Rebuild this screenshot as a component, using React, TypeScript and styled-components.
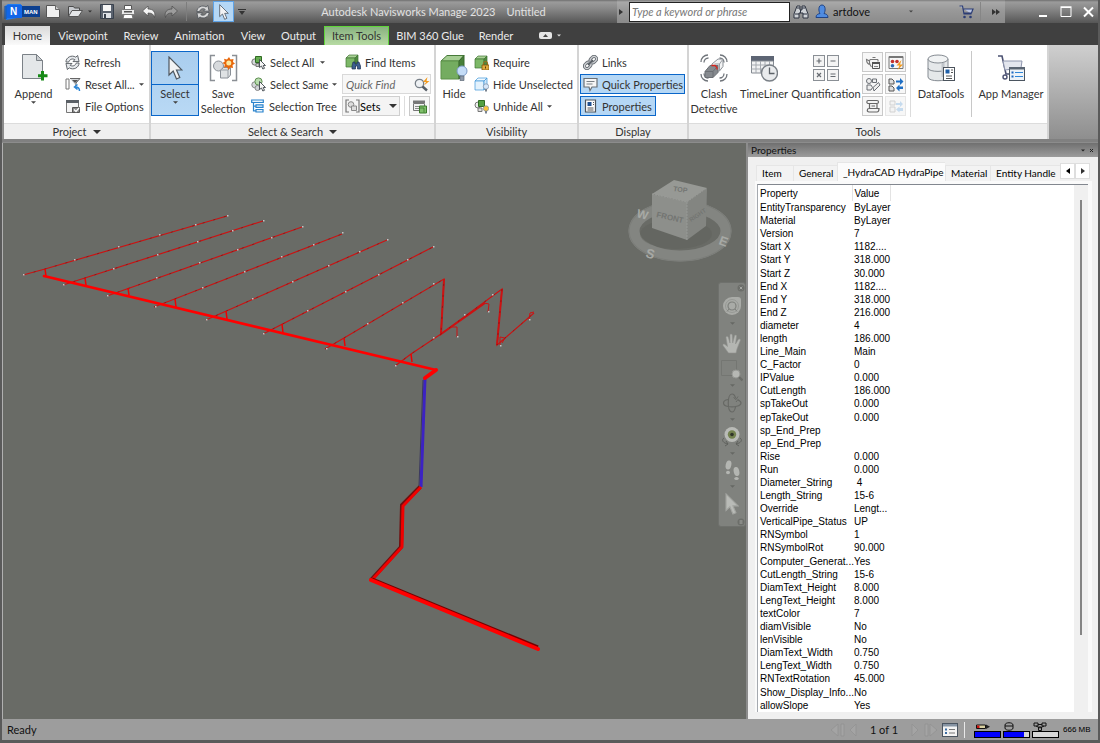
import React from "react";
import styled, { createGlobalStyle } from "styled-components";

const uiFont = `Lato, "Noto Sans", sans-serif`;
const listFont = `"Liberation Sans", Arial, sans-serif`;

const GlobalStyle = createGlobalStyle`
  *, *::before, *::after { box-sizing: border-box; }
  html, body, #root { height: 100%; }
  body { margin: 0; background: #555; font-family: ${uiFont}; font-size: 11px; color: #333; overflow: hidden; }
  button, input, select { font: inherit; color: inherit; margin: 0; padding: 0; border: 0; background: none; border-radius: 0; }
  button { cursor: default; white-space: nowrap; }
  svg { display: block; flex: none; }
`;

/* ---------- window frame ---------- */

const Window = styled.div`
  height: 100vh;
  display: flex;
  flex-direction: column;
  background: #8c8c8c;
  border: solid #5a5a5a;
  border-width: 0 2px 3px 2px;
`;

const TitleBar = styled.header`
  flex: none;
  height: 23px;
  display: flex;
  background: linear-gradient(#6f6f6f 0, #9b9b9b 2px, #8a8a8a 8px, #565656 100%);
`;

const QuickAccess = styled.div`
  display: flex;
  align-items: center;
  padding-left: 2px;
  width: 248px;
`;

const QuickButton = styled.button<{ $w: number; $on?: boolean; $push?: boolean }>`
  width: ${(p) => p.$w}px;
  height: 21px;
  display: flex;
  align-items: center;
  justify-content: center;
  ${(p) => p.$push && "margin-left:auto;"}
  ${(p) => p.$on && "background:#b5d7f5;border:1px solid #5fa3e6;"}
`;

const Rule = styled.span<{ $h: number; $color: string; $gap?: number }>`
  width: 1px;
  height: ${(p) => p.$h}px;
  flex: none;
  margin: 0 ${(p) => p.$gap || 0}px;
  background: ${(p) => p.$color};
`;

const Caption = styled.h1`
  flex: 1;
  margin: 0;
  font-size: 11px;
  font-weight: 400;
  line-height: 24px;
  color: #e2e2e2;
  display: flex;
  justify-content: center;
  gap: 11px;
  white-space: nowrap;
  overflow: hidden;
`;

const InfoCenter = styled.div`
  width: 388px;
  display: flex;
  align-items: center;
  background: linear-gradient(#7d7d7d 0, #a9a9a9 2px, #999 10px, #8b8b8b 100%);
  color: #111;
`;

const SearchInput = styled.input`
  width: 161px;
  height: 20px;
  margin: 0 2px 0 4px;
  padding: 0 2px;
  background: #fff;
  border: 1px solid #222;
  font-style: italic;
  font-size: 11px;
  &::placeholder { color: #777; opacity: 1; }
`;

const UserButton = styled.button`
  display: flex;
  align-items: center;
  gap: 4px;
  width: 98px;
  margin-left: 6px;
  > svg:last-child { margin-left: auto; }
`;

const WindowButtons = styled.div`
  width: 93px;
  display: flex;
  align-items: center;
  justify-content: flex-end;
  gap: 4px;
  padding-right: 1px;
`;

/* ---------- ribbon ---------- */

const TabBar = styled.nav`
  flex: none;
  height: 22px;
  display: flex;
  align-items: flex-end;
  padding-left: 3px;
  background: #404040;
`;

const Tab = styled.button<{ $w: number; $kind?: "active" | "context" }>`
  width: ${(p) => p.$w}px;
  height: 19px;
  line-height: 19px;
  color: ${(p) => (p.$kind ? "#333" : "#ececec")};
  ${(p) => p.$kind === "active" && "background:linear-gradient(#d9d9d9,#fafafa);"}
  ${(p) => p.$kind === "context" && "background:linear-gradient(#88b180,#b7dba3);border:1px solid #5fd53a;border-bottom:0;line-height:18px;"}
`;

const PanelToggle = styled.button`
  display: flex;
  align-items: center;
  gap: 5px;
  height: 19px;
  margin-left: 18px;
`;

const Ribbon = styled.div`
  flex: none;
  display: flex;
  margin: 0 0 0 2px;
  background: linear-gradient(#cfcfcf, #8e8e8e);
`;

const Group = styled.section<{ $w: number }>`
  width: ${(p) => p.$w}px;
  flex: none;
  background: #fff;
  border-right: 2px solid #d4d4d4;
`;

const GroupBody = styled.div<{ $flush?: boolean }>`
  height: 78px;
  padding: 6px 0 0 ${(p) => (p.$flush ? 0 : 1)}px;
  display: flex;
`;

const GroupTitle = styled.h2`
  margin: 0;
  height: 16px;
  background: #efefef;
  border-top: 1px solid #dcdcdc;
  font-size: 11px;
  font-weight: 400;
  line-height: 16px;
  display: flex;
  align-items: center;
  justify-content: center;
  gap: 6px;
`;

const Big = styled.button<{ $w: number; $on?: boolean }>`
  width: ${(p) => p.$w}px;
  height: 65px;
  flex: none;
  display: flex;
  flex-direction: column;
  align-items: center;
  line-height: 15px;
  text-align: center;
  ${(p) => p.$on && "background:linear-gradient(#a9cdee,#b9d9f5);box-shadow:inset 0 0 0 1px #0a66c9;"}
`;

const BigIcon = styled.span<{ $line?: boolean }>`
  width: 100%;
  height: 34px;
  flex: none;
  display: flex;
  align-items: center;
  justify-content: center;
  border-bottom: 1px solid ${(p) => (p.$line ? "#0a66c9" : "transparent")};
  margin-bottom: 1px;
`;

const SmallColumn = styled.div<{ $w: number; $left?: number }>`
  width: ${(p) => p.$w}px;
  flex: none;
  display: flex;
  flex-direction: column;
  align-items: flex-start;
  gap: 2px;
  padding-top: 1px;
  margin-left: ${(p) => p.$left || 0}px;
`;

const Small = styled.button<{ $on?: boolean; $w?: number }>`
  height: 20px;
  display: flex;
  align-items: center;
  gap: 4px;
  padding: 0 3px;
  ${(p) => p.$w && `width:${p.$w}px;`}
  ${(p) => p.$on && "background:#b5d7f5;border:1px solid #0a66c9;padding:0 2px;"}
  > svg:nth-of-type(2) { margin-left: auto; }
`;

const FieldRow = styled.div`
  display: flex;
  align-items: center;
  gap: 4px;
`;

const QuickFind = styled.label`
  width: 89px;
  height: 20px;
  display: flex;
  align-items: center;
  padding: 0 1px 0 3px;
  background: #f7f7f7;
  border: 1px solid #d9d9d9;
  input { width: 68px; font-style: italic; font-size: 11px; }
  input::placeholder { color: #666; opacity: 1; }
`;

const SetsBox = styled.label`
  width: 58px;
  height: 20px;
  display: flex;
  align-items: center;
  position: relative;
  padding-left: 2px;
  background: #f4f4f4;
  border: 1px solid #cfcfcf;
  select { appearance: none; width: 38px; color: #000; }
  > svg:last-child { position: absolute; right: 2px; }
`;

const Tile = styled.button<{ $dim?: boolean }>`
  width: 21px;
  height: 20px;
  display: flex;
  align-items: center;
  justify-content: center;
  background: #f7f7f7;
  border: 1px solid ${(p) => (p.$dim ? "#e6e6e6" : "#c9c9c9")};
`;

const TileGrid = styled.div`
  display: grid;
  grid-template-columns: 21px 21px;
  grid-auto-rows: 20px;
  gap: 2px;
  padding-top: 1px;
`;

/* ---------- work area ---------- */

const Work = styled.main`
  flex: 1;
  min-height: 0;
  display: flex;
  gap: 2px;
  padding: 1px 0 0 0;
  border-top: 3px solid #808080;
`;

const Viewport = styled.div`
  flex: 1;
  min-width: 0;
  position: relative;
  background: #696b66;
  border-left: 1px solid #b0b0b0;
  > svg { width: 100%; height: 100%; }
`;

const Cube = styled.div`
  position: absolute;
  right: 8px;
  top: 27px;
`;

const NavBar = styled.div`
  position: absolute;
  right: 0;
  top: 139px;
  width: 28px;
  display: flex;
  flex-direction: column;
  align-items: stretch;
  background: #80827e;
  border: 1px solid #6f716d;
  border-radius: 3px;
`;

const NavButton = styled.button<{ $h: number; $end?: boolean }>`
  height: ${(p) => p.$h}px;
  display: flex;
  align-items: center;
  justify-content: ${(p) => (p.$end ? "flex-end" : "center")};
`;

const Side = styled.aside`
  width: 350px;
  flex: none;
  display: flex;
  flex-direction: column;
  background: #f0f0f0;
`;

const SideTitle = styled.header`
  flex: none;
  height: 14px;
  display: flex;
  align-items: center;
  gap: 4px;
  padding: 0 4px 0 3px;
  background: linear-gradient(#707070, #9c9c9c);
  color: #111;
  font-size: 10px;
  h2 { margin: 0 auto 0 0; font: inherit; line-height: 13px; }
`;

const SideTabs = styled.div`
  flex: none;
  display: flex;
  align-items: flex-end;
  height: 24px;
  padding: 0 8px;
`;

const SideTab = styled.button<{ $w: number; $on?: boolean }>`
  width: ${(p) => p.$w}px;
  height: ${(p) => (p.$on ? 19 : 16)}px;
  line-height: 15px;
  padding-left: 5px;
  text-align: left;
  font-size: 10px;
  color: #000;
  background: ${(p) => (p.$on ? "#fbfbfb" : "#f3f3f3")};
  border-left: 1px solid #e6e6e6;
  border-top: 1px solid #e6e6e6;
`;

const Scroller = styled.button`
  width: 15px;
  height: 16px;
  display: flex;
  align-items: center;
  justify-content: center;
  margin-bottom: 2px;
  background: #fff;
  border: 1px solid #dedede;
`;

const Sheet = styled.div`
  flex: 1;
  min-height: 0;
  margin: 0 6px 7px 7px;
  padding: 3px 4px 0 2px;
  background: #fafafa;
`;

const ListBox = styled.div`
  height: 100%;
  display: flex;
  overflow: hidden;
  background: #fff;
  border-top: 1px solid #82878f;
  border-left: 1px solid #a5a9af;
`;

const PropertyTable = styled.table`
  height: 100%;
  width: 133px;
  table-layout: fixed;
  border-collapse: collapse;
  font-family: ${listFont};
  font-size: 10px;
  line-height: 13px;
  color: #000;
  th, td { padding: 0 0 0 2px; text-align: left; font-weight: 400; white-space: pre; }
  th { height: 16px; border-right: 1px solid #e3e3e3; }
`;

const ScrollTrack = styled.div`
  width: 14px;
  margin-left: auto;
  background: #f0f0f0;
  display: flex;
  justify-content: center;
  padding-top: 15px;
`;

const ScrollThumb = styled.div`
  width: 2px;
  height: 85%;
  background: #858585;
`;

const StatusBar = styled.footer`
  flex: none;
  height: 21px;
  display: flex;
  align-items: center;
  padding: 0 10px 0 5px;
  background: #9d9d9d;
  color: #111;
  line-height: 20px;
`;

const Sheets = styled.div`
  margin-left: auto;
  display: flex;
  align-items: center;
  gap: 2px;
  > button { margin-left: 2px; }
`;

const Counter = styled.span`
  width: 44px;
  text-align: center;
`;

const Gauges = styled.div`
  display: flex;
  gap: 2px;
  margin: 0 4px 0 5px;
`;

const Gauge = styled.div`
  width: 27px;
  display: flex;
  flex-direction: column;
  > svg { margin-left: 1px; }
`;

const GaugeBar = styled.div`
  height: 7px;
  border: 1px solid #000;
  background: #d8d8d8;
`;

const GaugeFill = styled.div`
  height: 100%;
  background: #0000ff;
`;

const Memory = styled.span`
  width: 25px;
  white-space: nowrap;
  font-family: ${listFont};
  font-size: 8px;
  color: #000;
`;

/* ---------- icons ---------- */

type SvgProps = { w: number; h: number; box?: string; children: React.ReactNode };
const Svg = ({ w, h, box, children }: SvgProps) => (
  <svg width={w} height={h} viewBox={box || `0 0 ${w} ${h}`} fill="none" aria-hidden="true">
    {children}
  </svg>
);

const Caret = ({ w = 5, color = "#444" }: { w?: number; color?: string }) => (
  <Svg w={w} h={3} box="0 0 6 3"><path d="M0 0h6L3 3z" fill={color} /></Svg>
);
const WideCaret = () => <Svg w={8} h={4}><path d="M0 0h8L4 4z" fill="#333" /></Svg>;

const Logo = () => (
  <Svg w={36} h={16}>
    <path d="M1 2l3-2h13v14l-4 0-11 2z" fill="#1f7bf0" />
    <path d="M0 2h3v13H0z" fill="#0a4ca8" opacity=".5" />
    <rect x="3" y="1" width="15" height="13" fill="#1266e8" />
    <rect x="18" y="2" width="18" height="11" fill="#0c3f8f" />
    <text x="6" y="11" fontFamily="Liberation Sans" fontWeight="700" fontSize="10" fill="#fff">N</text>
    <text x="20" y="10" fontFamily="Liberation Sans" fontWeight="700" fontSize="6" fill="#fff">MAN</text>
  </Svg>
);
const NewDoc = () => (
  <Svg w={14} h={13}><path d="M.5.5h9l4 4v8H.5z" fill="#f1f1f1" stroke="#555" /><path d="M9.500 .5v4h4" fill="#ccc" stroke="#666" /></Svg>
);
const OpenFolder = () => (
  <Svg w={16} h={13}><path d="M1.500 11.500V1.500h5l1 1.500h5v3" fill="#c9ccd0" stroke="#4b4b4b" /><path d="M1.500 11.500L5 5.500h10.500l-4 6z" fill="#e4e6e8" stroke="#555" /></Svg>
);
const Save = () => (
  <Svg w={14} h={15}><path d="M.5.5h13v14h-13z" fill="#5a626e" stroke="#39414d" /><rect x="3" y="1" width="8" height="6" fill="#f6f6f6" /><rect x="3" y="9" width="8" height="5" fill="#dfe3e8" /><rect x="4" y="10" width="2" height="4" fill="#39414d" /></Svg>
);
const Print = () => (
  <Svg w={14} h={14}><path d="M3.500 4V.5h7V4" fill="#fff" stroke="#555" /><rect x=".5" y="4.500" width="13" height="5" rx="1" fill="#e9e9e9" stroke="#777" /><rect x="3" y="6" width="8" height="1.500" fill="#555" /><path d="M3 9.500h8l1 4H2z" fill="#fff" stroke="#777" /></Svg>
);
const Undo = ({ dim }: { dim?: boolean }) => (
  <Svg w={14} h={12} box={dim ? "-14 0 14 12" : "0 0 14 12"}>
    <path d="M6 0v3c5 0 8 3 6.500 8.500C12 8.500 10 7 6 7v3L.5 5z" fill={dim ? "#9c9c9c" : "#f4f4f4"} stroke="#4a4a4a" strokeWidth=".7" transform={dim ? "scale(-1 1)" : undefined} />
  </Svg>
);
const Refresh = ({ s = 15, light }: { s?: number; light?: boolean }) => (
  <Svg w={s} h={s} box="0 0 16 16">
    <path d="M1 7.500C1 2.500 7 -.5 11.500 2.300L13.500 .5 15 7H8.500l2-2C7.500 3.200 4.700 5 4 7.500z" fill={light ? "#d8d8d8" : "#e6e9ec"} stroke="#4a4f55" strokeWidth=".9" />
    <path d="M15 8.500c0 5-6 8-10.500 5.200L2.500 15.500 1 9h6.500l-2 2c3 1.800 5.800 0 6.500-2.500z" fill={light ? "#d8d8d8" : "#e6e9ec"} stroke="#4a4f55" strokeWidth=".9" />
  </Svg>
);
const Cursor = ({ w, h, dim }: { w: number; h: number; dim?: boolean }) => (
  <Svg w={w} h={h} box="0 0 15 24">
    <path d="M1 1v18l4.200-4 3.300 8 3.300-1.500L8.500 14H14z" fill={dim ? "#b9bbb7" : "#f2f3f4"} stroke={dim ? "#a3a5a1" : "#4d565f"} strokeWidth="1.200" />
  </Svg>
);
const Customize = () => <Svg w={8} h={6}><path d="M0 .5h8" stroke="#333" /><path d="M1 2h6L4 6z" fill="#333" /></Svg>;
const RightTri = () => <Svg w={4} h={6}><path d="M0 0v6l4-3z" fill="#333" /></Svg>;
const Binoculars = () => (
  <Svg w={16} h={16}>
    <path d="M4 2h3v4h2V2h3l3 8v4h-5V9H6v5H1v-4z" fill="#cfd2d6" stroke="#2d3340" />
    <path d="M4 4h3M9 4h3M2 10h4M10 10h4M7.500 6v3" stroke="#2d3340" />
  </Svg>
);
const User = () => (
  <Svg w={14} h={15}><path d="M1 13.500c0-3 2-3.500 4-4C3.500 7.500 3 1 7 1s3.500 6.500 2 8.500c2 .5 4 1 4 4z" fill="#4f8be0" stroke="#1f4385" /></Svg>
);
const CartSmall = () => (
  <Svg w={15} h={14}><path d="M.5 1h3l1.500 8h7.500M4 4h10l-1.500 4H5" fill="#b9c4e2" stroke="#2c3d74" strokeWidth="1.200" /><circle cx="5.500" cy="12" r="1.300" fill="#2c3d74" /><circle cx="11.500" cy="12" r="1.300" fill="#2c3d74" /></Svg>
);
const DoubleRight = () => <Svg w={8} h={6}><path d="M0 0v6l4-3zM4 0v6l4-3z" fill="#333" /></Svg>;
const Minimize = () => <Svg w={17} h={12}><path d="M4 10h8" stroke="#fff" strokeWidth="2" /></Svg>;
const Maximize = () => <Svg w={20} h={12}><path d="M5 1.500h10v9H5z" stroke="#fff" /><path d="M4.500 1h11" stroke="#fff" strokeWidth="1.500" /></Svg>;
const Close = () => <Svg w={17} h={12}><path d="M4 1.500l9 9M13 1.500l-9 9" stroke="#fff" strokeWidth="2" /></Svg>;

const AppendIcon = () => (
  <Svg w={28} h={29}>
    <path d="M2.500 1.500h14l6 6v18h-20z" fill="#e4e7e9" stroke="#7b8187" />
    <path d="M16.500 1.500v6h6z" fill="#c9cdd0" stroke="#7b8187" />
    <path d="M22.500 18v9.500M18 22.700h9.500" stroke="#178a17" strokeWidth="3" />
  </Svg>
);
const ResetIcon = () => (
  <Svg w={16} h={15}>
    <path d="M1 2h3v10H1z" stroke="#777" /><path d="M5 1.500h10L11 6v3" fill="#d4d7da" stroke="#666" />
    <path d="M7 3h6l-3 3z" fill="#555" /><path d="M14.500 14c0-3-1.500-4-4-4m2-2.500L9.500 10l3 2.500" stroke="#2d86d6" strokeWidth="1.500" />
  </Svg>
);
const FileOptIcon = () => (
  <Svg w={16} h={15}><path d="M1.500 1.500h12v12h-12z" fill="#f4f4f4" stroke="#777" /><path d="M1 1h13v3H1z" fill="#5a5f65" /><path d="M7.500 8.500h7v5h-7z" fill="#888" stroke="#555" /><path d="M9 10.500l2 2 3-3.500" stroke="#fff" strokeWidth="1.200" /></Svg>
);
const SaveSelIcon = () => (
  <Svg w={29} h={28}>
    <path d="M6 1.500H1.500v25H6M23 1.500h4.500v25H23" stroke="#8a8f95" strokeWidth="1.500" />
    <circle cx="9.500" cy="12" r="5" fill="#d7dadd" stroke="#8a9097" />
    <path d="M11.500 16l3-2.500h7v7.500L19 24h-7.500z" fill="#dfe2e4" stroke="#8a9097" /><path d="M11.500 16H19v8M19 16l2.500-2.500" stroke="#9aa0a6" />
    <path d="M20 3l1.500 2.500L24.500 5l-.5 3L26 9.500 23.500 11l.5 3-3-.5L19.500 16 18 13l-3 .5.800-3L13.500 9l2.300-1.500L15 4.700l3 .8z" fill="#e8680c" /><circle cx="19.800" cy="9" r="2.500" fill="#fbe9a0" />
  </Svg>
);
const MiniCursor = ({ x, y }: { x: number; y: number }) => (
  <path transform={`translate(${x} ${y})`} d="M0 0v8l2-1.500 1.300 3 1.700-.7L3.700 6H6z" fill="#f7f7f7" stroke="#3f464d" strokeWidth=".9" />
);
const SelectAllIcon = () => (
  <Svg w={15} h={15}><circle cx="4" cy="7" r="3.200" fill="#d6d9dc" stroke="#777" /><path d="M4.500 1.500h6v6h-6z" fill="#67ad52" stroke="#2f6b22" /><path d="M5 8.500h3v3H5z" fill="#ccc" stroke="#777" /><MiniCursor x={8.500} y={4.500} /></Svg>
);
const SelectSameIcon = () => (
  <Svg w={15} h={15}><circle cx="3.800" cy="7.800" r="3" fill="#d6d9dc" stroke="#888" /><circle cx="7.500" cy="4.500" r="3.600" fill="#b9dcae" stroke="#5f8f52" /><circle cx="6.500" cy="11" r="2.500" fill="#d0d3d6" stroke="#888" /><MiniCursor x={8.500} y={4.500} /></Svg>
);
const TreeIcon = () => (
  <Svg w={14} h={14}><path d="M.7 1h11.600v2.500H.7zM5 5.800h7v2.500H5zM5 10.500h7V13H5z" fill="#eaf4fc" stroke="#2b84cd" strokeWidth="1.200" /><path d="M2.500 4v7.800H5M2.500 7.200H5" stroke="#2b84cd" strokeWidth="1.200" /></Svg>
);
const cubeShape = (edge: string, top: string, front: string, side: string) => (
  <>
    <path d="M1 4l3-3h9l-3 3z" fill={top} stroke={edge} strokeWidth=".7" />
    <path d="M1 4h9v9H1z" fill={front} stroke={edge} strokeWidth=".7" />
    <path d="M10 4l3-3v9l-3 3z" fill={side} stroke={edge} strokeWidth=".7" />
  </>
);
const greenCube = cubeShape("#3f7433", "#a9d295", "#7db868", "#4f8a40");
const FindIcon = () => <Svg w={16} h={16}>{greenCube}<g transform="translate(7 7)"><path d="M1 1h2v2h2V1h2l1.500 4v3H5.500V5h-2v3H0V5z" fill="#3d5f8f" stroke="#1f3355" strokeWidth=".7" /></g></Svg>;
const QuickFindIcon = () => (
  <Svg w={16} h={15}><circle cx="5.500" cy="6.500" r="4.200" fill="#eef1f4" stroke="#777f88" strokeWidth="1.300" /><path d="M8.500 9.500l4.500 4" stroke="#555d66" strokeWidth="2.400" /><path d="M13.500 0L9 5h3l-2 3.500L15.500 4h-3z" fill="#f39a1c" /></Svg>
);
const SetsIcon = () => (
  <Svg w={15} h={14}><path d="M4 1H1v12h3M11 1h3v12h-3" stroke="#777" strokeWidth="1.200" /><circle cx="6" cy="5.500" r="2.800" fill="#ddd" stroke="#888" /><path d="M6.500 7h5v4.500h-5z" fill="#ddd" stroke="#888" /></Svg>
);
const InspectIcon = () => (
  <Svg w={16} h={15}><path d="M1 1.500h12v2.500H1z" fill="#777" /><path d="M1.500 4.500h11v7h-11z" fill="#f1f1f1" stroke="#777" /><path d="M3 7.500h4M3 9.500h4" stroke="#888" /><path d="M7.500 7h7v7h-7z" fill="#7fbf6a" stroke="#3b7a2b" /><path d="M7 9h5v4.500" stroke="#3b7a2b" strokeWidth=".8" /></Svg>
);
const HideIcon = () => (
  <Svg w={28} h={28}>
    <path d="M1 7l6-5.500h17L19 7z" fill="#a5cd93" stroke="#477a3a" /><path d="M1 7h18v18H1z" fill="#74ac60" stroke="#5c9149" /><path d="M19 7l5-5.500v17L19 25z" fill="#477f39" stroke="#3a6a2e" />
    <circle cx="22" cy="17" r="5" fill="#c4dcf7" stroke="#7d9cc8" /><path d="M20 22h4v4.500h-4z" fill="#8d99a8" stroke="#5f6a79" strokeWidth=".7" />
  </Svg>
);
const RequireIcon = () => <Svg w={15} h={15}>{greenCube}<path d="M9.500 10V8.500a2 2 0 014 0V10" stroke="#9a6f1c" strokeWidth="1.200" /><path d="M8 10h7v5H8z" fill="#e0aa3e" stroke="#7d570f" strokeWidth=".8" /><path d="M11 11.500h1v2h-1z" fill="#5a3d08" /></Svg>;
const MiniBulb = ({ fill }: { fill: string }) => <><circle cx="12" cy="9.500" r="2.700" fill={fill} stroke="#7b8ba0" strokeWidth=".7" /><path d="M11 12h2v2.500h-2z" fill="#7b8490" /></>;
const HideUnselIcon = () => <Svg w={15} h={15}>{cubeShape("#3c97d8", "#f1f9ff", "#e3f2fd", "#cfe7fa")}<MiniBulb fill="#d6e7fa" /></Svg>;
const UnhideIcon = () => <Svg w={15} h={15}><circle cx="4" cy="6" r="3" fill="#eee" stroke="#777" /><path d="M4.500 1.500h6v6h-6z" fill="#55a043" stroke="#2f6b22" /><path d="M4 9h4v3.500H4z" fill="#ddd" stroke="#777" /><MiniBulb fill="#f9c33b" /></Svg>;
const LinkIcon = () => (
  <Svg w={15} h={15}>
    <g transform="rotate(-45 7.500 7.500)">
      <g stroke="#6a7076" strokeWidth="3"><rect x="0" y="5" width="7" height="5" rx="2.500" /><rect x="8" y="5" width="7" height="5" rx="2.500" /></g>
      <g stroke="#d4d6d9" strokeWidth="1.200"><rect x="0" y="5" width="7" height="5" rx="2.500" /><rect x="8" y="5" width="7" height="5" rx="2.500" /></g>
      <path d="M4 7.500h7" stroke="#555b62" strokeWidth="1.800" />
    </g>
  </Svg>
);
const SpeechIcon = () => <Svg w={15} h={15}><path d="M1 1.500h13v8.500H9L7 13.500 6 10H1z" fill="#f5f5f5" stroke="#6a7076" strokeWidth="1.200" /><path d="M3.500 4.500h8M3.500 7h6" stroke="#7a8086" /></Svg>;
const PropsIcon = () => <Svg w={15} h={14}><path d="M2.500 1h10v12h-10z" fill="#fff" stroke="#4d545b" strokeWidth="1.200" /><path d="M4.500 3h4v4h-4z" fill="#1f4f8f" /><path d="M10 3.500h1M10 5.500h1M4.500 9h6M4.500 11h6" stroke="#555" /></Svg>;

const ClashIcon = () => (
  <Svg w={28} h={28}>
    <path d="M1 8c0-4 3-7 7-7M4 8.500c0-2.500 2-4.500 4.500-4.500M27 8c0-4-3-7-7-7M24 8.500c0-2.500-2-4.500-4.500-4.500M1 20c0 4 3 7 7 7M4 19.500C4 22 6 24 8.500 24M27 20c0 4-3 7-7 7M24 19.500c0 2.500-2 4.500-4.500 4.500" stroke="#6f747a" strokeWidth="1.300" />
    <path d="M12 10l6-5h5v7.500L19.500 17H12z" fill="#f2f3f4" stroke="#8a8f95" /><path d="M23 5l-3.500 5h-5M19.500 10v7" stroke="#9b9fa5" />
    <path d="M5 17.500l5-6h8v7L13 23.500H5z" fill="#85898e" stroke="#6b6f74" /><path d="M5 17.500h8v6M13 17.500l5-6" stroke="#6b6f74" />
    <path d="M11.500 11.500H15l2 2v2" stroke="#d8231b" strokeWidth="1.300" />
  </Svg>
);
const TimelineIcon = () => (
  <Svg w={28} h={28}>
    <path d="M1 2h23v5H1z" fill="#5d6574" /><path d="M1.500 7h22v12h-22z" fill="#f1f2f3" stroke="#858b92" /><path d="M6 7v12M10.500 7v12M15 7v12M19.500 7v8M1.500 11h22M1.500 15h13" stroke="#a5aab0" />
    <circle cx="19.500" cy="19" r="8" fill="#e9ebed" stroke="#7a8087" strokeWidth="1.400" /><path d="M19.500 13.500V19.500h5" stroke="#5c6268" strokeWidth="1.300" />
  </Svg>
);
const QuantIcon = () => (
  <Svg w={27} h={28}><g fill="#f4f4f4" stroke="#8a8f95"><rect x=".5" y="1.500" width="11" height="11" /><rect x="14.500" y="1.500" width="11" height="11" /><rect x=".5" y="15.500" width="11" height="11" /><rect x="14.500" y="15.500" width="11" height="11" /></g><path d="M3.500 7h5M6 4.500v5M17.500 7h5M4 19l4 4M8 19l-4 4M17.500 20h5M17.500 22.500h5" stroke="#666b71" strokeWidth="1.200" /></Svg>
);
const DataIcon = () => (
  <Svg w={29} h={28}>
    <path d="M1 5v18c0 5 20 5 20 0V5" fill="#e5e8ea" stroke="#858b92" /><ellipse cx="11" cy="5" rx="10" ry="4" fill="#f1f3f4" stroke="#858b92" /><path d="M1 14c0 4.500 20 4.500 20 0" stroke="#858b92" /><path d="M16 9v14" stroke="#c0c5ca" strokeWidth="3" />
    <rect x="16.500" y="13.500" width="11" height="13" fill="#fff" stroke="#4b535c" /><path d="M18.500 15.500h4v4h-4z" fill="#1f5fa8" /><path d="M24 16h2M24 18.500h2M19 22h6M19 24.500h6" stroke="#555" />
  </Svg>
);
const AppIcon = () => (
  <Svg w={29} h={28}>
    <path d="M1 2h4l4 18h6" stroke="#4b5172" strokeWidth="1.600" /><path d="M6 7h19l-1 7-16 2z" fill="#e3e6ee" stroke="#9097af" /><circle cx="8" cy="23" r="2" fill="#fff" stroke="#4b5172" strokeWidth="1.400" />
    <rect x="12.500" y="13.500" width="15" height="13" fill="#eef3f8" stroke="#4b5560" /><path d="M12 13h16v2.500H12z" fill="#5a6573" /><path d="M14.500 18.500h2M14.500 22.500h2" stroke="#1a66c0" strokeWidth="2" /><path d="M18 18.500h8M18 22.500h8" stroke="#2f86d8" />
  </Svg>
);
const TeapotIcon = () => <Svg w={16} h={15}><path d="M5 4.500h8M7.500 2.500h3M5 4.500c-1 2-.5 5 1.500 7.500M4.500 6L1.500 4.500c0 3 1.500 5 4 5M13 4.500v2" stroke="#777" strokeWidth="1.100" /><path d="M7.500 7.500h7v6h-7z" fill="#f5f5f5" stroke="#555" /><path d="M7 7h8v2H7z" fill="#555" /><path d="M9 11.500h4" stroke="#888" /></Svg>;
const AppearanceIcon = () => <Svg w={16} h={15}><path d="M1 1.500h14v12H1z" fill="#f6f6f6" stroke="#777" /><path d="M1 1h14v2H1z" fill="#777" /><circle cx="4.500" cy="6.500" r="1.800" fill="#c4302b" /><circle cx="9" cy="6.500" r="1.800" fill="#c4302b" /><circle cx="4.500" cy="10.800" r="1.800" fill="#2b68b5" /><path d="M13.500 5L8.500 10.500h3L9.500 15 15 9.500h-3z" fill="#f39a1c" /></Svg>;
const BatchIcon = () => <Svg w={16} h={15}><g stroke="#6a6f75" fill="#eee"><circle cx="4" cy="4" r="2.500" /><path d="M7.500 2h4v3.500h-4zM2 8h4l1.500 2.500L6 13H2zM8 10.500l5.500-5L15 8l-6 6z" /></g></Svg>;
const CompareIcon = () => <Svg w={16} h={15}><path d="M1 2h3l2 2v3H1zM1 9h3l2 2v3H1z" fill="#ddd" stroke="#555" /><path d="M8 3.500h4V1l3.500 3.500L12 8V5.500H8zM15 9.500h-3.500V7.500L8 11l3.500 3.500v-2.500H15z" fill="#1f6fc4" /></Svg>;
const ScriptIcon = () => <Svg w={16} h={15}><path d="M3 1.500h9c2 0 2 3 0 3v5h2c0 3-1 3.500-2 3.500H4c-2.500 0-2-3.500 0-3.500h.5v-5H3c-1.500 0-1.500-3 0-3zM4.500 4.500H12M4.500 9.500H12M6.500 7h3.500" fill="#f3f3f3" stroke="#666" strokeWidth="1.200" /></Svg>;
const SwitchIcon = () => <Svg w={16} h={15}><g opacity=".4"><path d="M2 2h5v4H2zM2 8h5v5H2z" fill="#eee" stroke="#999" /><path d="M8 4h4V2l3 3-3 3V6H8zM15 9h-3.500V7.500L8 10.500l3.500 3V12H15z" fill="#7fb2e2" /></g></Svg>;

/* navigation bar glyphs */
const tone = "#b4b6b2";
const Wheel = () => <Svg w={18} h={18}><path d="M0 9a9 9 0 019-9h6q3 0 3 3v6a9 9 0 01-18 0z" fill="#a9aba7" /><circle cx="9" cy="9" r="6.500" stroke="#979995" /><circle cx="9" cy="9" r="4" stroke="#7e807c" strokeWidth="1.200" /><path d="M4 14.500l2-2.500M14 14.500l-2-2.500" stroke="#7e807c" /></Svg>;
const Hand = () => <Svg w={20} h={21}><path d="M6.500 20L1 12.500c-.5-1.500 1-2 2-1l2.500 2L4 4.500c0-1.500 2-1.500 2.300 0L8 10V2c0-1.500 2.200-1.500 2.200 0l.5 8L12.500 3c.3-1.500 2.300-1 2 .4L13.500 11l2.800-4.500c1-1.300 2.500-.3 2 1L15 16l-1 4z" fill={tone} stroke="#90928e" strokeWidth=".6" /></Svg>;
const ZoomWin = () => <Svg w={22} h={22}><path d="M.5 .5h15v15H.5z" stroke="#747672" /><circle cx="15" cy="14" r="4" fill="#b6b8b4" stroke="#969894" /><path d="M18 17l3.500 3.500" stroke="#6a6c68" strokeWidth="2.400" /></Svg>;
const Orbit = () => <Svg w={20} h={20}><path d="M10 1c-5 0-5 18 0 18 2 0 3-2.500 3.500-5M10 1c2 0 3 2 3.500 4M6 6.500C0 7.500 0 12.500 6 13.500c6 1 13-.5 13-3.500 0-1.500-1.500-2.500-3-3" stroke="#676965" strokeWidth="1.200" /><path d="M11.500 4.500l2.500 2 2-3M14 9l2-2.500 2 2" stroke="#676965" /></Svg>;
const Look = () => <Svg w={22} h={22}><path d="M3 12c-3 2-1 5 4 6M19 12c3 2 1 5-4 6M5 15l2 3-3 2M17 15l-2 3 3 2" stroke="#5f615d" /><circle cx="11" cy="8.500" r="7.500" fill="#b9bbb7" /><circle cx="11" cy="8.500" r="4.200" fill="#73824f" /><circle cx="11" cy="8.500" r="1.800" fill="#30352a" /></Svg>;
const Walk = () => <Svg w={17} h={21}><ellipse cx="4.500" cy="5" rx="2.800" ry="4.500" transform="rotate(12 4.500 5)" fill={tone} /><ellipse cx="4" cy="12.500" rx="2" ry="1.700" fill={tone} /><ellipse cx="12.500" cy="11.500" rx="2.800" ry="4.500" transform="rotate(-12 12.500 11.500)" fill={tone} /><ellipse cx="12.500" cy="18.500" rx="2.200" ry="1.500" fill={tone} /></Svg>;
const Dot = ({ lines }: { lines?: boolean }) => <Svg w={8} h={8}><circle cx="4" cy="4" r="3.500" fill="#6c6e6a" /><path d={lines ? "M2.500 3h3M2.500 5h3" : "M2.700 2.700l2.600 2.600M5.300 2.700L2.700 5.300"} stroke="#a5a7a3" /></Svg>;

const ViewCube = () => (
  <svg width="114" height="100" viewBox="624 170 114 100" fill="none" role="img" aria-label="ViewCube">
    <ellipse cx="680" cy="231" rx="46" ry="25" stroke="#838581" strokeWidth="11" />
    <ellipse cx="680" cy="231" rx="51" ry="30" stroke="#7b7d79" strokeWidth="1" />
    <ellipse cx="676" cy="234" rx="36" ry="15" fill="#5f615c" opacity=".5" />
    <path d="M652 194l22-14 33 8-20 14z" fill="#979995" />
    <path d="M652 194l35 8v38l-35-12z" fill="#8d8f8b" />
    <path d="M687 202l20-14-1 38-19 14z" fill="#838581" />
    <path d="M652 194l35 8 20-14M687 202v38" stroke="#9fa19d" strokeWidth=".7" strokeDasharray="2 1" />
    <g fontFamily="Liberation Sans" fontWeight="700" fill="#737572">
      <text x="673" y="191" fontSize="7" transform="rotate(8 673 191)">TOP</text>
      <text x="656" y="217" fontSize="8" transform="rotate(13 656 217)">FRONT</text>
      <text x="691" y="222" fontSize="6" transform="rotate(-34 691 222)">RIGHT</text>
      <g fill="#a7a9a5">
        <text x="636" y="217" fontSize="12" transform="rotate(15 636 217)">W</text>
        <text x="645" y="257" fontSize="13" transform="rotate(15 645 257)">S</text>
        <text x="718" y="244" fontSize="13" transform="rotate(20 718 244)">E</text>
      </g>
    </g>
  </svg>
);

/* ---------- piping model ---------- */

const branches = [
  "M23 275L45 269L227 216", "M63 285L263 221", "M107 296L302 227", "M154 307L342 234",
  "M206 320L387 240", "M263 334L433 247", "M325 349L344 338L444 279L441 334", "M395 366L411 354L441 334L502 289L497 345L534 313",
];
const risers = [[45, 269, 276], [85, 278, 285], [128, 288, 295], [175, 299, 307], [226, 311, 319], [282, 324, 333], [344, 338, 346], [411, 354, 362]];
const heads = [
  [23, 275], [74, 260], [118, 247], [159, 235], [195, 225], [227, 216],
  [63, 285], [113, 269], [157, 255], [197, 242], [232, 231], [263, 221],
  [107, 296], [156, 278], [199, 263], [237, 250], [271, 238], [302, 227],
  [155, 307], [202, 288], [244, 272], [281, 257], [313, 245], [342, 233],
  [206, 320], [252, 299], [292, 282], [328, 266], [359, 252], [387, 240],
  [263, 334], [307, 311], [345, 292], [378, 275], [407, 260], [433, 247],
  [326, 349], [367, 324], [402, 303], [433, 284], [395, 366], [433, 338], [464, 315], [492, 295],
  [457, 337], [488, 312], [500, 346], [529, 320],
];

const Model = () => (
  <svg viewBox="3 143 743 576" preserveAspectRatio="xMinYMin slice" fill="none" role="img" aria-label="Sprinkler piping model">
    <g stroke="#cc1212" strokeWidth="1.200">
      {branches.map((d) => <path key={d} d={d} />)}
      <path d="M451 327l6 0v10M484 303l5 1-1 8M529 319l1-6 4-1M500 345v-8l5 1-3 5" strokeWidth="1" />
      <path d="M444 279L441 334L485 303M502 289L497 345" strokeWidth="2" />
    </g>
    <g stroke="#551b1b" strokeWidth="1" strokeDasharray="2 9" opacity=".5">
      {branches.map((d) => <path key={d} d={d} />)}
    </g>
    <g stroke="#e00" strokeWidth="1.500">
      {risers.map(([x, a, b]) => <path key={x} d={`M${x} ${a}L${x + 1} ${b}`} />)}
    </g>
    <path d="M44 276L436 370" stroke="#ff0000" strokeWidth="2.600" strokeLinecap="round" />
    <path d="M425 378L421 487" stroke="#3c22c4" strokeWidth="3" />
    <path d="M423 380L419 486" stroke="#3b3960" strokeWidth="1" />
    <path d="M436 370L425 378" stroke="#f00" strokeWidth="4" strokeLinecap="round" />
    <path d="M420 487L402 505L401 547L371 580" stroke="#701010" strokeWidth="4" />
    <path d="M421 487L403 506L402 547L372 580" stroke="#f00000" strokeWidth="3" />
    <path d="M372 579L538 647" stroke="#700" strokeWidth="3" />
    <path d="M371 580L538 649" stroke="#ff0000" strokeWidth="4" strokeLinecap="round" />
    {heads.map(([x, y]) => <rect key={`${x}-${y}`} x={x} y={y - 1} width="1.500" height="1.500" fill="#c4c4c4" />)}
  </svg>
);

/* ---------- data ---------- */

const tabs: [string, number, ("active" | "context")?][] = [
  ["Home", 45, "active"], ["Viewpoint", 66], ["Review", 50], ["Animation", 67], ["View", 40],
  ["Output", 51], ["Item Tools", 65, "context"], ["BIM 360 Glue", 82], ["Render", 50],
];

const properties: [string, string][] = [
  ["EntityTransparency", "ByLayer"], ["Material", "ByLayer"], ["Version", "7"], ["Start X", "1182...."],
  ["Start Y", "318.000"], ["Start Z", "30.000"], ["End X", "1182...."], ["End Y", "318.000"], ["End Z", "216.000"],
  ["diameter", "4"], ["length", "186.000"], ["Line_Main", "Main"], ["C_Factor", "0"], ["IPValue", "0.000"],
  ["CutLength", "186.000"], ["spTakeOut", "0.000"], ["epTakeOut", "0.000"], ["sp_End_Prep", ""], ["ep_End_Prep", ""],
  ["Rise", "0.000"], ["Run", "0.000"], ["Diameter_String", " 4"], ["Length_String", "15-6"], ["Override", "Lengt..."],
  ["VerticalPipe_Status", "UP"], ["RNSymbol", "1"], ["RNSymbolRot", "90.000"], ["Computer_Generat...", "Yes"],
  ["CutLength_String", "15-6"], ["DiamText_Height", "8.000"], ["LengText_Height", "8.000"], ["textColor", "7"],
  ["diamVisible", "No"], ["lenVisible", "No"], ["DiamText_Width", "0.750"], ["LengText_Width", "0.750"],
  ["RNTextRotation", "45.000"], ["Show_Display_Info...", "No"], ["allowSlope", "Yes"],
];

type BigProps = { w: number; icon: React.ReactNode; label: string; second?: string; caret?: boolean; on?: boolean };
const BigButton = ({ w, icon, label, second, caret, on }: BigProps) => (
  <Big $w={w} $on={on}>
    <BigIcon $line={on}>{icon}</BigIcon>
    <span>{label}</span>
    {second && <span>{second}</span>}
    {caret && <Caret />}
  </Big>
);

type SmallProps = { icon: React.ReactNode; label: string; caret?: boolean; on?: boolean; w?: number };
const SmallButton = ({ icon, label, caret, on, w }: SmallProps) => (
  <Small $on={on} $w={w}>{icon}<span>{label}</span>{caret && <Caret />}</Small>
);

const PageArrows = ({ flip }: { flip?: boolean }) => (
  <Svg w={30} h={14}>
    <path d={flip ? "M4 1v12l6-6zM17 1h3v12h-3zM22 1v12l7-6z" : "M8 1v12L1 7zM11 1h3v12h-3zM26 1v12l-6-6z"} fill="#a4a4a4" stroke="#909090" strokeWidth=".7" />
  </Svg>
);

export default function App() {
  return (
    <Window>
      <GlobalStyle />
      <TitleBar>
        <QuickAccess>
          <Logo />
          <QuickButton $w={26} aria-label="New"><NewDoc /></QuickButton>
          <QuickButton $w={18} aria-label="Open"><OpenFolder /></QuickButton>
          <QuickButton $w={12} aria-label="Open options"><Caret w={4} color="#333" /></QuickButton>
          <QuickButton $w={22} aria-label="Save"><Save /></QuickButton>
          <QuickButton $w={21} aria-label="Print"><Print /></QuickButton>
          <QuickButton $w={22} aria-label="Undo"><Undo /></QuickButton>
          <QuickButton $w={21} aria-label="Redo"><Undo dim /></QuickButton>
          <Rule $h={19} $color="#7d7d7d" $gap={5} />
          <QuickButton $w={21} aria-label="Refresh"><Refresh s={14} light /></QuickButton>
          <QuickButton $w={21} $on aria-label="Select"><Cursor w={10} h={16} /></QuickButton>
          <QuickButton $w={16} aria-label="Customize"><Customize /></QuickButton>
        </QuickAccess>
        <Caption><span>Autodesk Navisworks Manage 2023</span><span>Untitled</span></Caption>
        <InfoCenter>
          <QuickButton $w={8} aria-label="Collapse search"><RightTri /></QuickButton>
          <SearchInput aria-label="Search" placeholder="Type a keyword or phrase" />
          <QuickButton $w={17} aria-label="Find"><Binoculars /></QuickButton>
          <UserButton><User /><span>artdove</span><Caret w={4} /></UserButton>
          <QuickButton $w={16} $push aria-label="App store"><CartSmall /></QuickButton>
          <Rule $h={19} $color="#868686" $gap={6} />
          <QuickButton $w={18} aria-label="More"><DoubleRight /></QuickButton>
        </InfoCenter>
        <WindowButtons>
          <button aria-label="Minimize"><Minimize /></button>
          <button aria-label="Maximize"><Maximize /></button>
          <button aria-label="Close"><Close /></button>
        </WindowButtons>
      </TitleBar>

      <TabBar>
        {tabs.map(([name, w, kind]) => <Tab key={name} $w={w} $kind={kind}>{name}</Tab>)}
        <PanelToggle aria-label="Ribbon display">
          <Svg w={13} h={7}><rect width="13" height="7" rx="2" fill="#e4e4e4" /><path d="M4 5h5L6.500 2z" fill="#444" /></Svg>
          <Caret w={4} color="#ddd" />
        </PanelToggle>
      </TabBar>

      <Ribbon>
        <Group $w={147}>
          <GroupBody>
            <BigButton w={57} icon={<AppendIcon />} label="Append" caret />
            <SmallColumn $w={84}>
              <SmallButton icon={<Refresh />} label="Refresh" />
              <SmallButton w={84} icon={<ResetIcon />} label="Reset All..." caret />
              <SmallButton icon={<FileOptIcon />} label="File Options" />
            </SmallColumn>
          </GroupBody>
          <GroupTitle>Project<WideCaret /></GroupTitle>
        </Group>
        <Group $w={285}>
          <GroupBody $flush>
            <BigButton w={48} icon={<Cursor w={15} h={24} />} label="Select" caret on />
            <BigButton w={48} icon={<SaveSelIcon />} label="Save" second="Selection" />
            <SmallColumn $w={90} $left={1}>
              <SmallButton w={80} icon={<SelectAllIcon />} label="Select All" caret />
              <SmallButton w={90} icon={<SelectSameIcon />} label="Select Same" caret />
              <SmallButton icon={<TreeIcon />} label="Selection Tree" />
            </SmallColumn>
            <SmallColumn $w={90} $left={4}>
              <SmallButton icon={<FindIcon />} label="Find Items" />
              <QuickFind><input aria-label="Quick Find" placeholder="Quick Find" /><QuickFindIcon /></QuickFind>
              <FieldRow>
                <SetsBox><SetsIcon /><select aria-label="Sets"><option>Sets</option></select><WideCaret /></SetsBox>
                <Rule $h={20} $color="#ddd" />
                <Tile aria-label="Selection inspector"><InspectIcon /></Tile>
              </FieldRow>
            </SmallColumn>
          </GroupBody>
          <GroupTitle>Select &amp; Search<WideCaret /></GroupTitle>
        </Group>
        <Group $w={143}>
          <GroupBody>
            <BigButton w={34} icon={<HideIcon />} label="Hide" />
            <SmallColumn $w={104}>
              <SmallButton icon={<RequireIcon />} label="Require" />
              <SmallButton icon={<HideUnselIcon />} label="Hide Unselected" />
              <SmallButton w={84} icon={<UnhideIcon />} label="Unhide All" caret />
            </SmallColumn>
          </GroupBody>
          <GroupTitle>Visibility</GroupTitle>
        </Group>
        <Group $w={110}>
          <GroupBody>
            <SmallColumn $w={105}>
              <SmallButton icon={<LinkIcon />} label="Links" />
              <SmallButton w={105} icon={<SpeechIcon />} label="Quick Properties" on />
              <SmallButton w={76} icon={<PropsIcon />} label="Properties" on />
            </SmallColumn>
          </GroupBody>
          <GroupTitle>Display</GroupTitle>
        </Group>
        <Group $w={360}>
          <GroupBody>
            <BigButton w={48} icon={<ClashIcon />} label="Clash" second="Detective" />
            <BigButton w={52} icon={<TimelineIcon />} label="TimeLiner" />
            <BigButton w={72} icon={<QuantIcon />} label="Quantification" />
            <TileGrid>
              <Tile aria-label="Autodesk Rendering"><TeapotIcon /></Tile>
              <Tile aria-label="Appearance Profiler"><AppearanceIcon /></Tile>
              <Tile aria-label="Batch Utility"><BatchIcon /></Tile>
              <Tile aria-label="Compare"><CompareIcon /></Tile>
              <Tile aria-label="Scripter"><ScriptIcon /></Tile>
              <Tile $dim aria-label="Switchback"><SwitchIcon /></Tile>
            </TileGrid>
            <Rule $h={66} $color="#dcdcdc" $gap={4} />
            <BigButton w={52} icon={<DataIcon />} label="DataTools" />
            <Rule $h={66} $color="#c8c8c8" $gap={4} />
            <BigButton w={70} icon={<AppIcon />} label="App Manager" />
          </GroupBody>
          <GroupTitle>Tools</GroupTitle>
        </Group>
      </Ribbon>

      <Work>
        <Viewport>
          <Model />
          <Cube><ViewCube /></Cube>
          <NavBar>
            <NavButton $h={9} $end aria-label="Close bar"><Dot /></NavButton>
            <NavButton $h={28} aria-label="Steering wheel"><Wheel /></NavButton>
            <NavButton $h={7} aria-label="Wheel options"><Caret color="#666864" /></NavButton>
            <NavButton $h={32} aria-label="Pan"><Hand /></NavButton>
            <NavButton $h={23} aria-label="Zoom window"><ZoomWin /></NavButton>
            <NavButton $h={7} aria-label="Zoom options"><Caret color="#666864" /></NavButton>
            <NavButton $h={27} aria-label="Orbit"><Orbit /></NavButton>
            <NavButton $h={7} aria-label="Orbit options"><Caret color="#666864" /></NavButton>
            <NavButton $h={27} aria-label="Look"><Look /></NavButton>
            <NavButton $h={7} aria-label="Look options"><Caret color="#666864" /></NavButton>
            <NavButton $h={26} aria-label="Walk"><Walk /></NavButton>
            <NavButton $h={7} aria-label="Walk options"><Caret color="#666864" /></NavButton>
            <NavButton $h={27} aria-label="Select"><Cursor w={14} h={22} dim /></NavButton>
            <NavButton $h={9} $end aria-label="Customize bar"><Dot lines /></NavButton>
          </NavBar>
        </Viewport>
        <Side>
          <SideTitle>
            <h2>Properties</h2>
            <button aria-label="Auto hide"><Caret w={4} color="#222" /></button>
            <button aria-label="Close panel"><Svg w={5} h={5}><path d="M1 1l3 3M4 1L1 4" stroke="#222" /></Svg></button>
          </SideTitle>
          <SideTabs>
            <SideTab $w={37}>Item</SideTab>
            <SideTab $w={44}>General</SideTab>
            <SideTab $w={108} $on>_HydraCAD HydraPipe</SideTab>
            <SideTab $w={45}>Material</SideTab>
            <SideTab $w={70}>Entity Handle</SideTab>
            <Scroller aria-label="Previous tab"><Svg w={4} h={6}><path d="M4 0v6L0 3z" fill="#000" /></Svg></Scroller>
            <Scroller aria-label="Next tab"><RightTri /></Scroller>
          </SideTabs>
          <Sheet>
            <ListBox>
              <PropertyTable>
                <colgroup><col style={{ width: 94 }} /><col /></colgroup>
                <thead><tr><th>Property</th><th>Value</th></tr></thead>
                <tbody>
                  {properties.map(([name, value]) => <tr key={name}><td>{name}</td><td>{value}</td></tr>)}
                </tbody>
              </PropertyTable>
              <ScrollTrack><ScrollThumb /></ScrollTrack>
            </ListBox>
          </Sheet>
        </Side>
      </Work>

      <StatusBar>
        <span>Ready</span>
        <Sheets>
          <PageArrows />
          <Counter>1 of 1</Counter>
          <PageArrows flip />
          <button aria-label="Sheet browser">
            <Svg w={16} h={14}><rect x=".5" y=".5" width="15" height="13" fill="#f4f4f4" stroke="#4b5560" /><path d="M1 1h14v2.500H1z" fill="#8794a3" /><path d="M3 6.500h2M3 10h2" stroke="#3c6ea5" strokeWidth="2" /><path d="M7 6.500h6M7 10h6" stroke="#777" /></Svg>
          </button>
          <Rule $h={16} $color="#e8e8e8" $gap={4} />
        </Sheets>
        <Gauges>
          <Gauge>
            <Svg w={16} h={9}><path d="M1.500 3h9v3.500h-9z" fill="#d8d0a0" stroke="#111" /><path d="M2 3.500h2.500V6H2z" fill="#c11" /><path d="M11 2.500l4 2.200-4 2.300z" fill="#222" /></Svg>
            <GaugeBar><GaugeFill style={{ width: "100%" }} /></GaugeBar>
          </Gauge>
          <Gauge>
            <Svg w={10} h={9}><path d="M1 3c0-3 8-3 8 0v3c0 3-8 3-8 0zM1 4h8" stroke="#111" /></Svg>
            <GaugeBar><GaugeFill style={{ width: "78%" }} /></GaugeBar>
          </Gauge>
          <Gauge>
            <Svg w={14} h={9}><path d="M1 1h4v3H1zM9 1h4v3H9zM5.500 5h3v3.500h-3zM3 4l4 2 4-2M5 2.500h4" stroke="#111" /></Svg>
            <GaugeBar><GaugeFill style={{ width: "0%" }} /></GaugeBar>
          </Gauge>
        </Gauges>
        <Memory>666 MB</Memory>
      </StatusBar>
    </Window>
  );
}
